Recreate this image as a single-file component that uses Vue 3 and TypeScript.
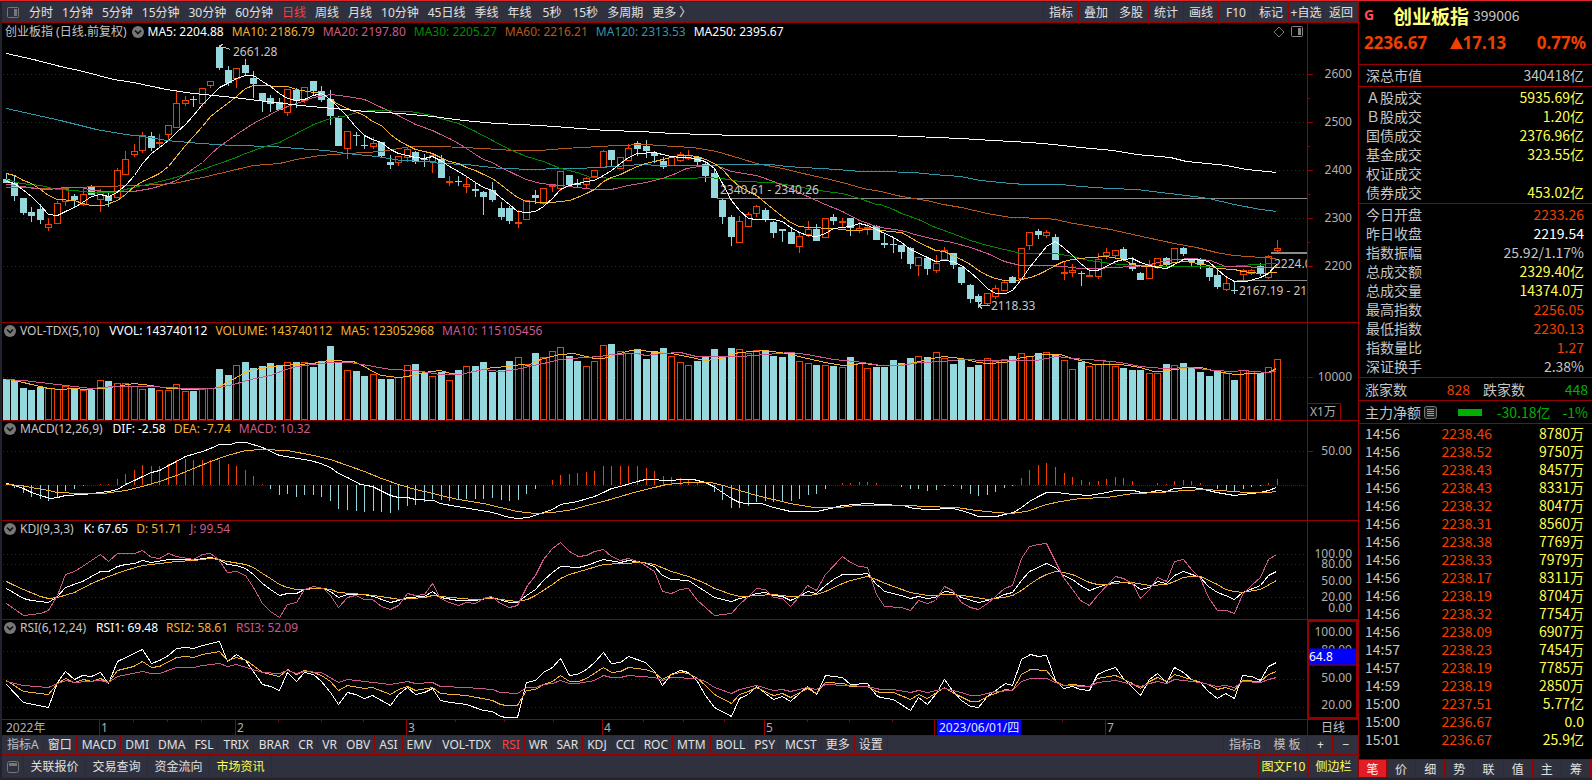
<script setup lang="ts">
type Tone = 'plain' | 'white' | 'gold' | 'pink' | 'green' | 'brown' | 'teal' | 'yellow' | 'up' | 'down'
interface Reading { text: string; tone: Tone }
interface Box { x: number; y: number; w: number; h: number; up: boolean }
interface Trace { tone: Tone; points: string }
interface Scale { text: string; y: number }

const UNIT = 3
const TILE = 1320
const PLOT_LEFT = 2
const PLOT_WIDTH = 1305

const periods = ['分时', '1分钟', '5分钟', '15分钟', '30分钟', '60分钟', '日线', '周线', '月线', '10分钟', '45日线', '季线', '年线', '5秒', '15秒', '多周期', '更多 〉']
const actions = ['指标', '叠加', '多股', '统计', '画线', 'F10', '标记', '+自选', '返回']
const indicators = ['指标A', '窗口', 'MACD', 'DMI', 'DMA', 'FSL', 'TRIX', 'BRAR', 'CR', 'VR', 'OBV', 'ASI', 'EMV', 'VOL-TDX', 'RSI', 'WR', 'SAR', 'KDJ', 'CCI', 'ROC', 'MTM', 'BOLL', 'PSY', 'MCST', '更多', '设置']
const links = ['关联报价', '交易查询', '资金流向', '市场资讯']
const quoteTabs = ['笔', '价', '细', '势', '联', '值', '主', '筹']

/* direction, high, body top, body bottom, low */
const candleData = `d519,537,549,549 d525,549,588,600 d594,594,639,642 d622,636,648,663 d612,627,660,669 u655,673,681,692 u604,610,671,671 u567,567,604,615 d582,588,600,622 u561,583,612,615 d555,562,585,587 u567,574,599,635 d579,588,604,620 u504,510,592,592 u453,478,524,524 u432,454,464,470 u398,405,452,458 d396,408,444,450 u402,427,430,442 u375,375,404,418 u272,310,383,383 u289,300,310,315 d289,297,300,318 u264,265,311,320 u243,244,255,263 d135,141,204,207 d198,210,249,257 u204,205,235,263 d178,195,219,222 d213,234,252,291 d279,279,304,333 d285,294,312,333 d294,306,330,330 u267,267,338,345 d264,270,303,321 u261,262,301,308 d243,243,273,285 d258,273,300,303 d270,297,348,372 d348,354,438,438 u393,394,446,474 d396,405,409,435 d408,435,438,444 u411,430,440,445 d426,426,468,471 d465,486,495,504 u468,469,488,497 u442,447,473,485 d453,456,486,489 d462,477,480,500 u462,467,483,518 d465,477,534,534
u528,544,548,557 d528,543,548,557 u530,552,560,576 d546,567,573,588 d573,576,591,642 d546,570,600,603 d606,624,651,657 d618,624,663,669 u632,666,669,681 u600,601,659,659 d570,585,594,610 u564,565,611,614 u552,556,560,573 u513,514,566,570 d525,525,555,558 d537,549,555,558 u533,535,554,564 u510,511,529,529 u450,454,502,502 d450,450,480,500 u471,472,506,506 u434,445,482,482 d423,429,447,465 d420,438,454,471 d453,459,468,486 d471,483,501,504 u470,471,497,497 u456,462,482,485 u450,465,475,477 d468,471,486,492 d483,492,528,543 d504,519,594,594 d597,600,651,669 d645,651,711,735 u648,663,728,728 u636,643,680,680 u615,619,641,648 d624,630,657,665 d663,666,699,711 d687,689,693,723 d687,696,732,732 u696,709,740,756 u663,688,704,708 d672,687,723,723 u654,655,713,713 d642,651,663,672 u654,663,667,678 d654,654,684,705 u668,684,692,697 u672,682,686,702 d675,678,720,720 d702,731,735,741
d711,732,735,756 d735,735,756,774 d741,744,792,804 u771,772,797,825 d771,774,807,822 u765,789,812,818 u741,751,779,779 d759,759,795,804 d801,801,849,852 d852,855,897,906 d882,888,906,921 u879,880,911,914 u855,865,890,896 u843,847,871,871 d828,831,849,849 u744,745,836,836 u696,697,737,747 d687,693,705,714 u690,697,707,713 d702,711,780,780 u784,817,821,837 u792,811,818,828 d813,819,822,855 u809,825,829,830 u759,778,830,836 u744,757,766,774 u750,751,767,773 d741,747,777,780 d771,789,807,810 d816,819,840,840 u780,793,836,836 u774,775,802,804 d771,774,796,800 u744,745,787,787 d741,744,762,765 d774,778,787,798 d774,778,795,804 d801,804,831,840 d807,825,861,864 u831,850,868,870 d843,870,873,879 u808,811,823,840 u807,811,820,824 d789,798,822,825 u765,769,833,836 u720,745,752,753`

const volumeData = `177 180 204 210 201 204 207 198 207 210 209 180 183 189 190 198 207 204 210 210 192 213 213 207 203 147 165 135 126 144 138 129 136 126 126 126 141 123 78 127 150 153 168 162 177 177 171 135 132 158 168 156
180 150 138 138 126 156 150 123 111 132 99 111 93 81 108 123 138 123 75 72 93 99 87 117 93 84 108 126 135 123 111 87 111 84 87 99 90 90 108 111 98 123 129 135 135 138 141 111 129 144 141 141
120 130 114 108 111 96 114 132 117 141 135 114 123 117 108 99 108 99 96 103 120 147 126 138 132 123 138 144 150 150 159 159 132 135 129 144 156 168 153 159 180 150 153 159 141 117`

const macdData = `492 504 519 531 537 543 534 513 507 498 496 492 491 477 462 450 435 438 438 432 420 417 420 420 419 420 432 438 450 468 491 507 525 522 531 525 525 531 543 567 570 573 576 573 576 579 570 558 555 546 537 540
543 540 537 537 537 534 540 543 540 522 507 496 480 465 462 459 456 453 438 438 438 438 438 444 453 468 471 474 478 487 496 516 540 564 564 558 546 543 546 543 543 537 525 522 507 496 489 489 486 486 489 495
496 500 507 507 513 510 498 498 507 522 528 525 516 504 498 474 450 435 429 441 459 471 480 486 483 477 471 474 483 495 496 489 492 483 480 483 489 496 507 510 516 507 500 498 489 477`

const barX = (i: number) => Math.floor(6.28 + 8.53 * i)
const numbers = (s: string) => s.trim().split(/\s+/).map(Number)

const wicks: { x: number; y1: number; y2: number; up: boolean }[] = []
const bodies: Box[] = candleData.trim().split(/\s+/).map((row, i) => {
  const up = row[0] === 'u'
  const [high, top, bottom, low] = row.slice(1).split(',').map((v) => Math.floor(Number(v) / UNIT))
  const x = barX(i)
  if (high < top) wicks.push({ x, y1: high, y2: top, up })
  if (low > bottom) wicks.push({ x, y1: bottom, y2: low + 1, up })
  return { x: x - 3, y: top, w: 7, h: Math.max(1, up ? bottom - top + 1 : bottom - top), up }
})

const volumes: Box[] = numbers(volumeData).map((v, i) => {
  const y = 320 + Math.round(v / UNIT)
  return { x: barX(i) - 3, y, w: 7, h: 420 - y, up: bodies[i].up }
})

const MACD_ZERO = 485
const macdBars: Box[] = numbers(macdData).map((v, i) => {
  const end = 320 + Math.round(v / UNIT)
  return { x: barX(i), y: Math.min(end, MACD_ZERO), w: 1, h: Math.abs(end - MACD_ZERO), up: v < 496 }
})

function trace(tone: Tone, top: number, tiles: string[]): Trace {
  const points = tiles.flatMap((tile, t) =>
    tile.split(' ').map((p) => p.split(',').map(Number))
      .filter(([x]) => t === tiles.length - 1 || x < TILE)
      .map(([x, y]) => `${Math.floor((x + t * TILE) / UNIT) + 0.5},${top + Math.floor(y / UNIT) + 0.5}`))
  return { tone, points: points.join(' ') }
}

const priceTraces: Trace[] = [
  trace('brown', 0, [
    '19,562 180,566 290,559 420,555 520,549 607,533 658,520 709,507 760,495 838,489 889,478 960,466 1042,460 1144,453 1230,440',
    '0,439 130,446 220,451 300,451 370,444 480,440 530,436 620,433 700,438 760,441 830,455 900,475 949,490 1027,504 1102,524 1156,536 1207,548 1270,564',
    '0,574 64,588 140,600 190,612 244,622 322,640 390,651 500,656 526,658 580,671 690,687 800,713 883,730 949,742 1010,758 1060,765 1190,776']),
  trace('teal', 0, [
    '19,325 100,342 180,361 290,389 376,402 430,408 500,421 600,430 700,436 820,438 890,446 980,450 1040,460 1130,470 1200,480 1280,483',
    '0,490 80,494 130,499 180,505 290,508 350,506 425,506 460,501 530,500 600,493 660,495 990,493 1040,500 1140,504 1190,508 1260,513',
    '0,514 100,518 160,524 240,530 300,540 390,550 440,553 540,554 600,560 690,565 770,569 840,577 920,587 985,596 1063,613 1140,628 1190,635']),
  trace('green', 0, [
    '19,537 60,550 121,556 172,568 223,570 274,576 340,578 400,563 454,549 505,538 556,524 607,509 658,491 709,473 736,460 787,442 838,428 889,400 940,372 991,356 1042,346 1080,335 1120,331 1232,334 1297,346',
    '0,354 55,369 106,395 157,421 208,447 259,469 310,484 361,504 412,518 450,531 540,535 750,535 796,533 847,536 898,545 1000,546 1051,555 1102,566 1156,573 1207,581 1258,594 1309,612',
    '0,613 40,628 64,640 115,657 166,682 217,701 271,721 322,736 373,748 424,760 526,760 577,769 628,780 690,789 760,797 832,799 1050,800 1120,794 1190,791']),
  trace('pink', 0, [
    '19,552 70,558 100,564 145,568 196,561 247,561 274,571 325,573 400,575 454,566 505,550 529,541 556,522 580,504 607,486 631,463 658,438 709,404 760,370 811,344 838,328 880,312 940,291 991,283 1040,289 1093,299 1144,321 1195,345 1246,374 1297,391',
    '0,403 28,415 55,430 79,444 106,462 130,477 157,488 181,502 208,514 232,526 259,538 300,550 361,556 412,562 463,569 514,567 565,556 616,548 667,535 700,523 740,504 796,496 830,497 874,513 949,526 1000,545 1051,564 1102,590 1156,614 1207,633 1258,660 1309,679',
    '0,682 64,692 115,705 166,717 217,726 271,741 322,760 373,784 420,795 499,795 550,800 601,805 652,806 700,803 760,800 800,797 832,787 883,778 940,776 990,781 1036,800 1190,802']),
  trace('gold', 0, [
    '19,519 43,525 70,540 94,551 121,567 145,587 172,597 223,601 247,609 274,616 310,616 352,601 376,582 403,560 427,543 454,532 478,519 505,498 529,470 556,437 580,408 607,378 631,350 658,327 682,309 709,289 736,266 760,256 862,260 889,267 940,276 964,280 991,297 1015,313 1042,324 1093,346 1117,363 1144,377 1171,402 1195,420 1222,435 1246,448 1273,453 1297,460',
    '0,473 28,484 55,491 79,503 106,512 130,523 157,534 181,552 208,575 232,592 259,603 310,608 337,606 361,603 388,600 412,592 439,580 463,567 490,545 514,533 541,522 565,510 592,498 616,491 643,485 667,477 694,473 720,467 745,465 772,469 796,478 823,491 847,508 874,537 898,560 925,574 949,587 1000,627 1027,648 1051,666 1078,679 1102,682 1180,684 1231,690 1300,689',
    '0,690 64,698 91,711 115,727 142,740 166,751 193,753 217,766 244,777 271,793 295,810 322,825 346,834 373,840 397,843 424,839 450,832 475,824 499,810 526,795 550,784 577,777 628,771 679,769 730,777 757,792 790,799 830,800 883,787 920,784 985,797 1012,804 1063,807 1087,813 1141,820 1190,818']),
  trace('white', 0, [
    '19,160 100,178 180,200 250,214 340,238 400,248 500,268 580,280 700,293 800,304 900,316 1000,324 1100,333 1200,341 1300,349',
    '0,352 70,360 170,370 300,376 420,384 500,390 600,394 700,399 800,402 890,406',
    '0,406 100,409 240,415 340,421 450,428 520,433 600,443 700,451 770,462 870,472 920,483 1040,496 1100,507 1190,517']),
  trace('white', 0, [
    '19,543 43,549 67,567 94,588 121,615 145,643 172,647 196,634 223,622 247,606 274,588 301,582 325,588 345,580 376,555 403,525 427,490 454,460 478,443 505,421 529,396 556,372 580,345 607,312 631,288 658,263 682,249 709,235 736,226 760,227 787,243 811,258 838,279 862,294 889,302 913,297 940,287 964,281 980,290 1006,312 1036,343 1066,378 1093,406 1117,419 1144,427 1171,447 1195,460 1222,465 1246,473 1273,476 1297,469',
    '0,482 28,498 55,515 79,529 106,547 130,562 157,572 181,592 208,614 232,633 259,638 286,635 310,620 337,594 361,567 388,557 412,549 439,544 463,540 490,527 514,512 541,490 565,472 592,459 643,457 667,464 694,469 720,473 745,473 772,478 796,485 823,506 847,550 874,600 898,632 925,655 949,659 1000,658 1027,663 1051,682 1078,698 1102,706 1129,710 1156,700 1180,686 1207,681 1231,678 1258,670 1282,677 1309,687',
    '0,693 40,712 64,726 91,748 142,771 166,784 193,781 217,784 244,795 271,816 295,838 322,865 346,879 376,880 397,872 424,838 448,802 475,768 499,738 526,725 550,742 577,766 601,790 628,810 652,812 679,798 706,784 730,777 757,775 781,787 808,796 832,802 859,806 883,793 910,777 950,777 985,784 1012,808 1036,829 1063,845 1100,845 1141,833 1165,820 1190,793']),
]

const volumeTraces: Trace[] = [
  trace('gold', 320, [
    '19,178 43,180 70,186 94,192 121,199 145,204 180,207 220,206 260,208 301,205 352,198 400,190 454,196 505,205 529,205 556,209 640,206 658,199 682,187 709,173 736,156 760,147 787,145 811,138 850,136 889,133 940,130 964,125 991,121 1060,125 1093,138 1117,155 1144,165 1195,173 1222,169 1246,162 1273,158',
    '0,151 30,159 60,162 100,154 157,143 208,139 240,133 265,136 286,125 310,114 361,103 400,100 440,110 463,115 490,115 520,106 560,95 592,89 640,97 694,100 740,108 796,121 847,115 874,104 898,97 976,91 1040,100 1102,115 1156,127 1207,136 1270,129',
    '0,136 50,137 91,130 142,118 190,109 244,115 295,127 322,130 376,127 424,113 475,106 499,102 540,103 577,115 601,122 640,132 720,133 781,141 820,153 840,155 883,148 934,142 961,143 1012,155 1063,163 1120,160 1165,158 1190,145']),
  trace('pink', 320, [
    '19,177 70,181 121,187 172,192 223,200 274,205 340,200 454,200 560,205 640,205 700,192 750,179 811,166 850,151 889,139 940,134 991,127 1050,127 1120,138 1171,149 1246,152 1300,160',
    '0,162 60,163 130,148 181,154 208,152 240,145 280,137 310,130 361,118 430,113 480,109 514,102 592,100 616,106 667,100 720,97 770,108 850,109 900,108 976,103 1051,98 1102,104 1180,118 1270,128',
    '0,135 60,136 120,128 190,124 250,118 320,121 470,120 530,110 580,115 660,120 720,127 780,139 850,146 930,143 1000,150 1060,153 1090,151 1160,157 1190,154']),
]

const macdTraces: Trace[] = [
  trace('white', 320, [
    '19,490 43,496 70,505 94,517 121,526 150,536 172,533 196,527 250,523 325,515 352,507 376,493 403,481 427,468 454,458 478,451 505,436 529,425 556,410 607,395 631,386 658,373 690,373 709,367 740,367 787,381 838,406 930,420 961,429 991,442 1015,459 1042,472 1080,492 1117,500 1171,525 1195,533 1222,533 1246,538 1300,542',
    '0,549 50,558 106,569 157,578 208,592 235,596 265,591 310,578 337,569 361,554 412,545 463,530 490,516 514,506 541,498 592,485 616,478 643,478 667,481 694,481 720,479 760,478 796,486 820,498 847,517 874,536 898,546 920,550 965,551 1000,562 1027,567 1051,574 1129,574 1171,566 1207,556 1282,549',
    '0,552 70,557 100,564 142,569 217,565 244,572 271,580 295,589 350,589 373,584 400,578 424,562 448,545 475,530 499,517 530,517 580,524 628,526 679,518 706,512 760,512 785,517 808,517 832,511 859,514 883,505 930,502 961,505 1010,517 1063,526 1087,522 1141,517 1165,511 1190,502']),
  trace('gold', 320, [
    '19,493 60,495 94,503 145,511 172,517 240,521 310,520 376,511 427,499 478,484 529,465 580,444 631,424 682,405 736,392 787,388 862,392 940,405 991,418 1042,436 1093,454 1144,476 1195,493 1246,508 1300,520',
    '0,526 55,539 130,551 181,562 232,573 286,580 337,577 400,567 439,556 490,544 541,530 592,514 643,503 680,493 745,487 810,487 850,496 898,511 949,526 1000,538 1051,549 1120,562 1200,563 1250,557',
    '0,556 90,556 130,559 230,563 290,571 350,577 390,580 440,574 499,554 540,545 600,536 679,531 760,519 840,517 910,511 980,508 1060,513 1100,517 1165,517 1190,514']),
]

const kdjTraces: Trace[] = [
  trace('white', 320, [
    '19,804 70,834 94,840 145,847 172,829 196,803 247,784 301,755 325,753 352,740 376,733 403,731 427,722 454,727 505,718 560,719 590,719 631,712 655,719 682,733 710,737 736,745 760,762 787,791 811,807 838,826 862,821 889,820 913,808 940,804 970,805 991,814 1015,833 1042,823 1090,823 1120,829 1171,847 1195,842 1222,832 1273,830 1297,815',
    '0,832 55,841 106,841 157,833 208,847 232,847 259,826 286,808 310,780 337,757 361,739 415,743 439,735 490,718 541,728 565,720 610,727 643,740 667,766 694,777 745,780 772,798 796,813 823,831 874,844 898,835 925,830 949,820 976,817 1000,825 1027,829 1051,841 1078,830 1102,814 1129,820 1156,797 1180,777 1207,763 1258,763 1282,760 1309,794',
    '0,802 13,815 64,826 91,835 115,829 142,836 166,831 193,814 217,818 244,833 295,848 346,834 373,823 397,816 424,780 448,754 499,729 526,743 550,765 577,779 601,797 628,811 652,802 679,793 706,784 757,789 781,808 808,801 832,784 859,791 883,765 910,754 961,772 985,798 1012,818 1036,827 1063,839 1087,817 1141,795 1165,767 1190,754']),
  trace('gold', 320, [
    '19,784 43,795 70,808 121,829 145,834 172,833 223,816 274,791 325,770 376,752 427,737 478,731 530,724 580,721 631,716 655,718 682,724 736,733 760,743 787,760 811,775 838,793 862,802 889,808 970,805 991,808 1015,817 1093,823 1140,829 1200,838 1273,832 1297,826',
    '0,829 100,838 157,836 232,844 262,838 286,826 337,793 361,775 388,763 439,748 490,733 541,730 610,727 643,733 694,754 745,769 796,790 823,804 874,823 900,829 1000,824 1051,830 1102,827 1129,822 1156,814 1207,790 1231,781 1282,769 1309,778',
    '0,784 40,799 91,817 142,826 217,823 271,829 322,838 370,833 397,825 424,811 448,793 475,776 499,762 526,753 550,757 577,764 628,787 652,793 679,794 730,787 757,788 808,797 859,793 883,783 910,772 934,769 961,769 1012,793 1036,807 1063,815 1087,818 1141,809 1190,781']),
  trace('pink', 320, [
    '19,849 70,886 121,880 145,870 172,825 196,764 223,754 247,740 301,703 325,723 352,700 403,700 427,690 454,711 478,715 505,701 529,709 580,718 607,704 631,700 655,719 682,757 709,754 736,766 760,803 787,850 811,875 838,891 862,853 889,848 913,809 940,799 970,804 991,826 1015,862 1042,832 1066,827 1093,838 1117,839 1144,859 1171,868 1195,856 1222,821 1246,826 1273,823 1297,790',
    '0,836 28,848 55,857 79,847 106,851 130,834 155,829 181,850 208,862 232,855 262,796 286,766 310,719 337,685 361,667 388,695 415,710 439,706 463,694 490,687 514,709 541,722 565,715 600,727 643,754 667,813 694,821 720,808 745,804 772,840 823,886 874,880 898,853 925,830 949,804 976,809 1000,832 1027,835 1051,859 1078,829 1102,797 1129,812 1156,763 1207,709 1231,726 1258,739 1282,743 1309,824',
    '0,841 13,859 64,862 91,872 115,840 142,851 166,841 193,799 217,812 244,848 271,862 295,868 322,850 346,829 373,805 397,796 424,716 448,680 475,673 499,670 550,773 577,808 601,842 628,856 652,826 706,769 730,775 757,790 781,835 808,808 832,773 859,785 883,725 910,718 934,748 961,774 985,833 1012,871 1040,872 1063,880 1087,824 1114,797 1141,773 1165,717 1190,703']),
]

const rsiTraces: Trace[] = [
  trace('white', 610, [
    '19,222 70,276 145,291 172,217 196,185 223,207 247,196 274,199 301,187 325,219 352,154 427,118 454,160 478,151 505,135 529,116 556,111 580,115 607,105 658,94 682,153 709,133 736,150 787,222 811,228 838,241 862,187 889,213 913,186 940,193 964,213 991,248 1015,283 1042,246 1066,252 1093,266 1117,256 1171,287 1195,252 1222,232 1246,253 1273,247 1297,234',
    '0,272 30,278 80,284 130,301 157,305 181,318 200,322 232,322 259,217 286,211 310,186 337,172 361,146 388,195 412,192 439,177 463,158 490,127 514,160 541,157 565,139 616,156 643,184 667,226 694,192 720,181 745,187 772,214 796,257 823,292 874,319 898,264 925,252 949,228 1000,268 1027,259 1051,275 1102,230 1129,252 1156,196 1207,203 1231,222 1282,220 1309,255',
    '0,262 40,268 91,300 115,262 142,283 166,252 193,208 217,241 244,270 271,288 295,292 322,259 376,220 397,225 424,148 450,133 475,139 499,136 526,212 550,235 577,229 601,237 628,241 652,193 679,180 706,171 730,206 757,231 781,256 808,208 832,189 859,218 883,172 910,187 934,209 961,216 985,244 1012,265 1036,251 1063,265 1087,196 1114,199 1141,211 1165,169 1190,156']),
  trace('gold', 610, [
    '19,210 70,244 145,254 172,219 196,205 223,216 250,208 274,213 301,205 325,217 352,180 400,168 427,154 454,173 478,168 529,143 556,139 580,142 607,133 658,124 682,151 709,142 740,151 787,187 838,199 862,178 889,193 913,182 940,186 964,196 991,215 1015,241 1042,226 1093,235 1117,232 1171,253 1195,238 1222,229 1246,241 1297,232',
    '0,251 80,257 157,271 181,283 200,287 232,287 259,241 286,237 310,222 337,214 361,197 388,213 415,215 439,206 490,173 514,187 541,184 565,172 616,178 643,186 667,208 694,192 720,186 745,190 772,204 796,225 823,253 874,280 898,254 925,245 949,231 1000,256 1027,250 1051,262 1102,236 1129,250 1156,217 1210,220 1231,228 1282,228 1309,243',
    '0,246 40,248 91,269 115,254 142,265 193,232 217,246 271,274 295,274 322,259 376,239 397,240 424,192 450,178 499,180 526,213 550,226 577,223 628,229 652,206 706,196 757,220 781,235 808,213 832,202 859,214 883,193 934,208 985,224 1012,238 1036,233 1063,241 1087,210 1141,213 1165,193 1190,184']),
  trace('pink', 610, [
    '19,213 70,226 145,233 172,219 200,211 223,217 301,211 325,216 352,200 427,184 454,190 478,190 529,172 580,172 607,167 658,160 682,169 709,163 787,187 838,190 862,181 889,190 913,184 964,187 1015,217 1042,208 1120,216 1171,223 1222,214 1246,220 1297,217',
    '0,230 80,232 157,239 181,247 232,250 259,233 286,232 310,224 337,220 361,211 388,220 412,220 463,210 490,196 514,202 541,202 565,196 643,202 667,211 694,202 770,204 796,215 823,232 874,249 898,238 949,227 1000,241 1027,238 1051,244 1102,232 1129,239 1156,224 1282,229 1309,236',
    '0,237 40,238 91,247 115,241 142,247 193,235 244,246 271,256 295,256 322,250 346,243 397,240 424,214 450,205 499,205 526,216 550,226 628,229 652,217 706,211 757,222 781,229 808,220 832,214 859,220 883,208 961,216 1012,229 1036,226 1063,233 1087,214 1141,216 1165,208 1190,202']),
]

interface Pane {
  id: string; title: string; top: number; height: number
  readings: Reading[]; grid: number[]; scale: Scale[]; ticks: number[]; minor: number[]
  bars: Box[]; traces: Trace[]
}

const r = (text: string, tone: Tone): Reading => ({ text, tone })

const panes: Pane[] = [
  {
    id: 'price', title: '创业板指 (日线.前复权)', top: 23, height: 299,
    readings: [r('MA5: 2204.88', 'white'), r('MA10: 2186.79', 'gold'), r('MA20: 2197.80', 'pink'), r('MA30: 2205.27', 'green'), r('MA60: 2216.21', 'brown'), r('MA120: 2313.53', 'teal'), r('MA250: 2395.67', 'white')],
    grid: [74, 122, 170, 218, 266],
    scale: [{ text: '2600', y: 74 }, { text: '2500', y: 122 }, { text: '2400', y: 170 }, { text: '2300', y: 218 }, { text: '2200', y: 266 }],
    ticks: [74, 122, 170, 218, 266], minor: [98, 146, 194, 242], bars: bodies, traces: priceTraces,
  },
  {
    id: 'vol', title: 'VOL-TDX(5,10)', top: 323, height: 97,
    readings: [r('VVOL: 143740112', 'white'), r('VOLUME: 143740112', 'gold'), r('MA5: 123052968', 'gold'), r('MA10: 115105456', 'pink')],
    grid: [377], scale: [{ text: '10000', y: 377 }], ticks: [377], minor: [], bars: volumes, traces: volumeTraces,
  },
  {
    id: 'macd', title: 'MACD(12,26,9)', top: 421, height: 99,
    readings: [r('DIF: -2.58', 'white'), r('DEA: -7.74', 'gold'), r('MACD: 10.32', 'pink')],
    grid: [451], scale: [{ text: '50.00', y: 451 }], ticks: [451], minor: [], bars: macdBars, traces: macdTraces,
  },
  {
    id: 'kdj', title: 'KDJ(9,3,3)', top: 521, height: 98,
    readings: [r('K: 67.65', 'white'), r('D: 51.71', 'gold'), r('J: 99.54', 'pink')],
    grid: [554, 564, 581, 597, 608],
    scale: [{ text: '100.00', y: 554 }, { text: '80.00', y: 564 }, { text: '50.00', y: 581 }, { text: '20.00', y: 597 }, { text: '0.00', y: 608 }],
    ticks: [], minor: [], bars: [], traces: kdjTraces,
  },
  {
    id: 'rsi', title: 'RSI(6,12,24)', top: 620, height: 99,
    readings: [r('RSI1: 69.48', 'white'), r('RSI2: 58.61', 'gold'), r('RSI3: 52.09', 'pink')],
    grid: [651, 679, 707],
    scale: [{ text: '100.00', y: 630 }, { text: '80.00', y: 649 }, { text: '50.00', y: 678 }, { text: '20.00', y: 707 }],
    ticks: [], minor: [], bars: [], traces: rsiTraces,
  },
]

const notes = [
  { text: '2661.28', x: 233, y: 52 },
  { text: '2340.61 - 2340.26', x: 720, y: 190 },
  { text: '2118.33', x: 991, y: 306 },
  { text: '2224.0', x: 1274, y: 264 },
  { text: '2167.19 - 21', x: 1239, y: 291 },
]
const months = [
  { text: '1', x: 99 }, { text: '2', x: 235 }, { text: '3', x: 406 }, { text: '4', x: 602 },
  { text: '5', x: 764 }, { text: '', x: 934 }, { text: '7', x: 1105 },
]
const weeks = [133, 167, 201, 278, 321, 363, 455, 504, 553, 643, 683, 724, 807, 849, 892, 1062]

const left = (x: number) => `${((x - PLOT_LEFT) / PLOT_WIDTH) * 100}%`
const topIn = (p: { top: number; height: number }, y: number) => `${((y - p.top) / p.height) * 100}%`

interface Stat { label: string; value: string; tone: Tone }
const s = (label: string, value: string, tone: Tone): Stat => ({ label, value, tone })
const statGroups: Stat[][] = [
  [s('深总市值', '340418亿', 'plain')],
  [s('Ａ股成交', '5935.69亿', 'yellow'), s('Ｂ股成交', '1.20亿', 'yellow'), s('国债成交', '2376.96亿', 'yellow'), s('基金成交', '323.55亿', 'yellow'), s('权证成交', '', 'yellow'), s('债券成交', '453.02亿', 'yellow')],
  [s('今日开盘', '2233.26', 'up'), s('昨日收盘', '2219.54', 'white'), s('指数振幅', '25.92/1.17%', 'plain'), s('总成交额', '2329.40亿', 'yellow'), s('总成交量', '14374.0万', 'yellow'), s('最高指数', '2256.05', 'up'), s('最低指数', '2230.13', 'up'), s('指数量比', '1.27', 'up'), s('深证换手', '2.38%', 'plain')],
]

const trades = [
  ['14:56', '2238.46', '8780万'], ['14:56', '2238.52', '9750万'], ['14:56', '2238.43', '8457万'], ['14:56', '2238.43', '8331万'],
  ['14:56', '2238.32', '8047万'], ['14:56', '2238.31', '8560万'], ['14:56', '2238.38', '7769万'], ['14:56', '2238.33', '7979万'],
  ['14:56', '2238.17', '8311万'], ['14:56', '2238.19', '8704万'], ['14:56', '2238.32', '7754万'], ['14:56', '2238.09', '6907万'],
  ['14:57', '2238.23', '7454万'], ['14:57', '2238.19', '7785万'], ['14:59', '2238.19', '2850万'], ['15:00', '2237.51', '5.77亿'],
  ['15:00', '2236.67', '0.0'], ['15:01', '2236.67', '25.9亿'],
]
</script>

<template>
  <div class="terminal">
    <main class="desk">
      <nav class="bar top-bar" aria-label="周期">
        <button class="icon-button" type="button" aria-label="侧栏">
          <svg width="12" height="12" viewBox="0 0 12 12"><rect x="0.5" y="0.5" width="11" height="10" rx="1" fill="none" stroke="#777" /><rect x="7" y="2" width="3" height="7" fill="#777" /></svg>
        </button>
        <div class="periods">
          <button v-for="p in periods" :key="p" type="button" :class="{ active: p === '日线', seconds: p.endsWith('秒') }">{{ p }}</button>
        </div>
        <div class="actions">
          <button v-for="a in actions" :key="a" type="button">{{ a }}</button>
        </div>
      </nav>

      <div class="panes">
        <section v-for="pane in panes" :key="pane.id" class="pane" :class="pane.id" :aria-label="pane.title">
          <div class="plot">
            <svg class="canvas" :viewBox="`${PLOT_LEFT} ${pane.top} ${PLOT_WIDTH} ${pane.height}`" preserveAspectRatio="none" shape-rendering="crispEdges">
              <line v-for="g in pane.grid" :key="g" class="grid" x1="3" x2="1307" :y1="g + 0.5" :y2="g + 0.5" />
              <line v-if="pane.id === 'macd'" class="grid dense" x1="3" x2="1307" y1="485.5" y2="485.5" />
              <template v-if="pane.id === 'price'">
                <rect v-for="(w, i) in wicks" :key="`w${i}`" :class="w.up ? 'fill-up' : 'fill-down'" :x="w.x" :y="w.y1" width="1" :height="w.y2 - w.y1" />
              </template>
              <template v-for="(b, i) in pane.bars" :key="`b${i}`">
                <rect v-if="b.up && b.w > 1 && b.h > 1" class="hollow" :x="b.x + 0.5" :y="b.y + 0.5" :width="b.w - 1" :height="b.h - 1" />
                <rect v-else :class="b.up ? 'fill-up' : 'fill-down'" :x="b.x" :y="b.y" :width="b.w" :height="b.h" />
              </template>
              <template v-if="pane.id === 'price'">
                <path class="gap" d="M717 198.5H1307M1237 280.5H1307" />
                <path class="gap thick" d="M1271 253H1307" />
                <path class="pointer" d="M220 47.5V45.5L223 44.5M222 47.5H225L230 49.5M979 305.5H990M979 305.5L982 302.5M979 305.5L982 308.5" />
              </template>
              <polyline v-for="(t, i) in pane.traces" :key="`t${i}`" class="trace" :class="t.tone" :points="t.points" />
            </svg>
            <header class="readings">
              <h2>{{ pane.title }}</h2>
              <button class="fold" type="button" aria-label="展开">
                <svg width="12" height="12" viewBox="0 0 12 12"><circle cx="6" cy="6" r="6" fill="#777" /><path d="M3 4.5L6 7.5L9 4.5" fill="none" stroke="#111" stroke-width="1.6" /></svg>
              </button>
              <span v-for="v in pane.readings" :key="v.text" :class="v.tone">{{ v.text }}</span>
              <svg v-if="pane.id === 'price'" class="corner" width="32" height="12" viewBox="0 0 32 12" fill="none" stroke="#777"><path d="M6 1L11 6L6 11L1 6Z" /><rect x="18.5" y="0.5" width="11" height="10" rx="1" stroke="#888" /><rect x="25" y="2" width="3" height="7" fill="#888" stroke="none" /></svg>
            </header>
            <template v-if="pane.id === 'price'">
              <span v-for="n in notes" :key="n.text" class="note" :style="{ left: left(n.x), top: topIn(pane, n.y) }">{{ n.text }}</span>
            </template>
          </div>
          <div class="axis">
            <i v-for="t in pane.ticks" :key="`a${t}`" class="tick" :style="{ top: topIn(pane, t) }" />
            <i v-for="t in pane.minor" :key="`m${t}`" class="tick minor" :style="{ top: topIn(pane, t) }" />
            <span v-for="v in pane.scale" :key="v.text" class="mark" :style="{ top: topIn(pane, v.y) }">{{ v.text }}</span>
            <span v-if="pane.id === 'vol'" class="multiple">X1万</span>
            <span v-if="pane.id === 'rsi'" class="cursor" :style="{ top: topIn(pane, 656) }">64.8</span>
          </div>
        </section>
      </div>

      <div class="timeline">
        <div class="dates">
          <span class="year">2022年</span>
          <i v-for="w in weeks" :key="w" class="week" :style="{ left: left(w) }" />
          <span v-for="m in months" :key="m.x" class="month" :style="{ left: left(m.x) }">{{ m.text }}</span>
          <span class="date-cursor" :style="{ left: left(937) }">2023/06/01/四</span>
        </div>
        <button class="period-name" type="button">日线</button>
      </div>

      <nav class="bar indicator-bar" aria-label="指标">
        <button v-for="n in indicators" :key="n" type="button" :class="{ active: n === 'RSI', cjk: /[^\x00-\x7F]/.test(n), muted: n === '指标A', short: n.length < 4, long: n.length > 4 }">{{ n }}</button>
        <div class="bar-end">
          <button class="muted wide" type="button">指标B</button>
          <button class="muted wide" type="button">模 板</button>
          <button class="step" type="button" aria-label="放大">+</button>
          <button class="step" type="button" aria-label="缩小">−</button>
        </div>
      </nav>

      <nav class="bar link-bar" aria-label="资讯">
        <button class="icon-button" type="button" aria-label="面板">
          <svg width="12" height="12" viewBox="0 0 12 12"><rect x="0.5" y="0.5" width="11" height="11" rx="2" fill="none" stroke="#777" /><rect x="2" y="2" width="8" height="3" fill="#777" /></svg>
        </button>
        <a v-for="l in links" :key="l" href="#" :class="{ hot: l === '市场资讯' }">{{ l }}</a>
        <div class="bar-end">
          <a class="hot f10" href="#">图文F10</a>
          <a class="hot side" href="#">侧边栏</a>
        </div>
      </nav>
    </main>

    <aside class="quote">
      <header class="quote-head">
        <div class="name-row">
          <b class="flag">G</b>
          <h1>创业板指</h1>
          <span>399006</span>
        </div>
        <div class="last-row up">
          <span>2236.67</span>
          <span class="change"><svg width="13" height="12" viewBox="0 0 13 12"><path d="M6.5 0L13 12H0Z" fill="#f04000" /></svg>17.13</span>
          <span>0.77%</span>
        </div>
      </header>
      <dl v-for="(group, g) in statGroups" :key="g" class="stats">
        <div v-for="row in group" :key="row.label">
          <dt>{{ row.label }}</dt>
          <dd :class="row.tone">{{ row.value }}</dd>
        </div>
      </dl>
      <dl class="breadth">
        <dt>涨家数</dt><dd class="up">828</dd>
        <dt>跌家数</dt><dd class="down">448</dd>
      </dl>
      <div class="flow">
        <span>主力净额</span>
        <svg width="13" height="13" viewBox="0 0 13 13"><rect x="0.5" y="0.5" width="12" height="12" rx="2" fill="#222" stroke="#777" /><path d="M3 3.5H10M3 5.5H10M3 7.5H10M3 9.5H10" stroke="#999" /></svg>
        <i class="flow-bar" />
        <span class="down amount">-30.18亿</span>
        <span class="down">-1%</span>
      </div>
      <div class="trades">
        <table>
          <tbody>
            <tr v-for="(t, i) in trades" :key="i">
              <td>{{ t[0] }}</td>
              <td class="up">{{ t[1] }}</td>
              <td class="yellow">{{ t[2] }}</td>
            </tr>
          </tbody>
        </table>
      </div>
      <nav class="tabs" aria-label="明细">
        <button v-for="t in quoteTabs" :key="t" type="button" :class="{ current: t === '笔' }">{{ t }}</button>
      </nav>
    </aside>
  </div>
</template>

<style>
html,
body {
  background: #000;
}
</style>

<style scoped>
.terminal {
  --line: #960000;
  --bar: #30313e;
  display: flex;
  min-height: 100vh;
  box-sizing: border-box;
  border-top: 1px solid #e0242a;
  border-bottom: 2px solid #22232c;
  background: #000;
  color: #c6c6c6;
  font: 12px/16px "Noto Sans", "Noto Sans CJK SC", sans-serif;
}
.terminal *,
.terminal *::before {
  box-sizing: border-box;
}
button {
  padding: 0;
  border: 0;
  background: none;
  color: inherit;
  font: inherit;
  white-space: nowrap;
}
a {
  color: inherit;
  text-decoration: none;
  white-space: nowrap;
}
h1,
h2,
dl,
dd {
  margin: 0;
  font-size: inherit;
  font-weight: normal;
}
svg {
  display: block;
  flex: none;
}

.desk {
  flex: 1;
  min-width: 0;
  display: flex;
  flex-direction: column;
  border-left: 2px solid #22232c;
}
.bar {
  display: flex;
  flex: none;
  background: var(--bar);
  color: #e0e0e0;
}
.top-bar {
  height: 22px;
  border-top: 1px solid #22232c;
  border-bottom: 1px solid var(--line);
}
.top-bar button {
  padding-top: 2px;
}
.icon-button {
  flex: none;
  width: 22px;
  display: flex;
  align-items: center;
  justify-content: center;
}
.periods {
  display: flex;
  flex: 1;
  min-width: 0;
  overflow: hidden;
  gap: 9px;
  padding-left: 5px;
}
.seconds {
  margin-left: 2px;
}
.active {
  color: #ff3c3c;
}
.actions {
  display: grid;
  grid-template-columns: repeat(9, 35px);
}
.actions button {
  border-left: 1px solid var(--line);
  overflow: hidden;
}

.panes {
  flex: 1;
  display: grid;
  grid-template-rows: 300fr 98fr 100fr 99fr 100fr;
}
.pane {
  display: grid;
  grid-template-columns: minmax(0, 1fr) 51px;
  min-height: 0;
  border-bottom: 1px solid var(--line);
}
.plot {
  position: relative;
  overflow: hidden;
}
.canvas {
  position: absolute;
  inset: 0;
  width: 100%;
  height: 100%;
}
.grid {
  stroke: #8c0000;
  stroke-dasharray: 1 3;
}
.grid.dense {
  stroke-dasharray: 1 1;
}
.fill-up {
  fill: #f04000;
}
.fill-down {
  fill: #94d8de;
}
.hollow {
  fill: #000;
  stroke: #f04000;
}
.gap {
  stroke: #8c8c8c;
}
.gap.thick {
  stroke-width: 2;
}
.pointer {
  fill: none;
  stroke: #c6c6c6;
}
.trace {
  fill: none;
  stroke: currentColor;
}
.readings {
  position: relative;
  display: flex;
  align-items: center;
  gap: 8px;
  height: 16px;
  padding-left: 2px;
  white-space: nowrap;
}
.readings h2 {
  order: 1;
  margin-right: 2px;
}
.readings .fold {
  order: 0;
  flex: none;
  margin-right: -4px;
}
.readings span {
  order: 2;
}
.price .readings {
  height: 18px;
  padding-left: 3px;
}
.price .readings h2 {
  order: 0;
  margin: 0;
}
.price .readings .fold {
  order: 1;
  margin-left: -3px;
}
.corner {
  order: 3;
  margin-left: auto;
  margin-right: 2px;
}
.note {
  position: absolute;
  transform: translateY(-50%);
  white-space: nowrap;
}
.axis {
  position: relative;
  overflow: hidden;
  border-left: 1px solid var(--line);
  color: #b0b0b0;
}
.tick {
  position: absolute;
  left: 0;
  width: 5px;
  height: 1px;
  background: var(--line);
}
.tick.minor {
  width: 2px;
}
.mark {
  position: absolute;
  right: 6px;
  line-height: 10px;
  transform: translateY(-50%);
}
.multiple {
  position: absolute;
  left: 0;
  bottom: 0;
  height: 17px;
  padding: 0 4px 0 2px;
  border: 1px solid var(--line);
  border-left: 0;
  border-bottom: 0;
}
.rsi .axis {
  border: 2px solid var(--line);
}
.cursor {
  position: absolute;
  left: 0;
  right: 0;
  height: 17px;
  transform: translateY(-50%);
  background: #00f;
  color: #fff;
  border-bottom: 1px solid var(--line);
}
.rsi .mark {
  right: 4px;
}

.timeline {
  display: grid;
  grid-template-columns: minmax(0, 1fr) 51px;
  flex: none;
  height: 16px;
  border-bottom: 1px solid var(--line);
  color: #b0b0b0;
  line-height: 15px;
}
.dates {
  position: relative;
}
.year {
  padding-left: 4px;
}
.week,
.month {
  position: absolute;
  top: 0;
  border-left: 1px solid var(--line);
}
.week {
  height: 2px;
}
.month {
  height: 15px;
  padding-left: 1px;
}
.date-cursor {
  position: absolute;
  top: 0;
  height: 15px;
  padding: 0 2px;
  background: #00f;
  color: #e8e8e8;
}
.period-name {
  border-left: 1px solid var(--line);
  color: #c6c6c6;
}

.indicator-bar {
  height: 20px;
  border-bottom: 2px solid var(--line);
}
.indicator-bar button {
  flex: none;
  padding: 0 4px 0 5px;
  border-right: 1px solid var(--line);
}
.indicator-bar .short {
  padding: 0 4px;
}
.indicator-bar .long {
  padding: 0 6px;
}
.indicator-bar .cjk {
  padding: 0 4px 0 4px;
}
.indicator-bar .muted {
  color: #c0c0c0;
  padding: 0 4px 0 5px;
}
.bar-end {
  display: flex;
  margin-left: auto;
  border-left: 1px solid var(--line);
}
.indicator-bar .bar-end .wide {
  width: 42px;
}
.indicator-bar .bar-end .step {
  width: 25px;
}
.indicator-bar .bar-end .step:last-child {
  border-right: 0;
}
.link-bar {
  height: 22px;
  border-bottom: 1px solid var(--line);
  line-height: 21px;
}
.link-bar > a,
.link-bar > .icon-button {
  border-right: 1px solid var(--line);
}
.link-bar > a {
  width: 62px;
  text-align: center;
}
.link-bar .hot {
  color: #ffff50;
}
.f10,
.side {
  width: 49px;
  text-align: center;
}
.side {
  width: 50px;
  border-left: 1px solid var(--line);
}

.quote {
  flex: none;
  width: 234px;
  display: flex;
  flex-direction: column;
  border-left: 1px solid var(--line);
  font: 14px/19px "Noto Sans CJK SC", sans-serif;
}
.quote-head {
  height: 64px;
  padding: 3px 6px 0 5px;
  border-bottom: 1px solid var(--line);
}
.name-row {
  display: flex;
  align-items: center;
  height: 22px;
}
.flag {
  width: 29px;
  color: #ff5050;
  font: bold 14px/16px "Noto Sans", sans-serif;
}
.name-row h1 {
  margin-right: 4px;
  color: #ffff78;
  font-size: 19px;
  font-weight: bold;
}
.last-row {
  display: flex;
  align-items: center;
  justify-content: space-between;
  height: 34px;
  font: bold 17px/24px "Noto Sans", sans-serif;
}
.change {
  display: flex;
  align-items: center;
  margin-right: 8px;
}
.stats {
  flex: none;
  padding: 1px 8px 1px 7px;
  border-bottom: 1px solid var(--line);
}
.stats > div {
  display: flex;
  justify-content: space-between;
  height: 19px;
}
.breadth,
.flow {
  display: flex;
  flex: none;
  height: 23px;
  padding: 0 4px 0 6px;
  align-items: center;
  border-bottom: 1px solid var(--line);
}
.breadth dd {
  margin-right: 13px;
  margin-left: auto;
}
.breadth dd:last-child {
  margin-right: 0;
}
.flow svg {
  margin-left: 3px;
}
.flow-bar {
  width: 24px;
  height: 7px;
  margin-left: 21px;
  background: #00b000;
}
.amount {
  margin-left: auto;
  margin-right: 12px;
}
.trades {
  flex: 1;
}
.trades table {
  width: 100%;
  border-collapse: collapse;
  line-height: 18px;
}
.trades td {
  padding: 0;
  text-align: right;
}
.trades td:first-child {
  padding-left: 6px;
  text-align: left;
}
.trades td:nth-child(2) {
  width: 80px;
}
.trades td:last-child {
  width: 100px;
  padding-right: 8px;
}
.tabs {
  display: grid;
  grid-template-columns: 28px repeat(7, 1fr);
  flex: none;
  height: 19px;
  padding-right: 1px;
  border-top: 1px solid var(--line);
  border-bottom: 1px solid var(--line);
  background: var(--bar);
  color: #e0e0e0;
  font-size: 12px;
  line-height: 17px;
}
.tabs button {
  border-right: 1px solid var(--line);
}
.tabs .current {
  background: #e01c24;
  color: #fff;
}

.plain { color: #c6c6c6; }
.white { color: #fff; }
.gold { color: #f4b230; }
.pink { color: #cc5a8c; }
.green { color: #008c00; }
.brown { color: #b85a1e; }
.teal { color: #3096a8; }
.yellow { color: #ffff50; }
.up { color: #f04000; }
.down { color: #00b000; }
</style>
